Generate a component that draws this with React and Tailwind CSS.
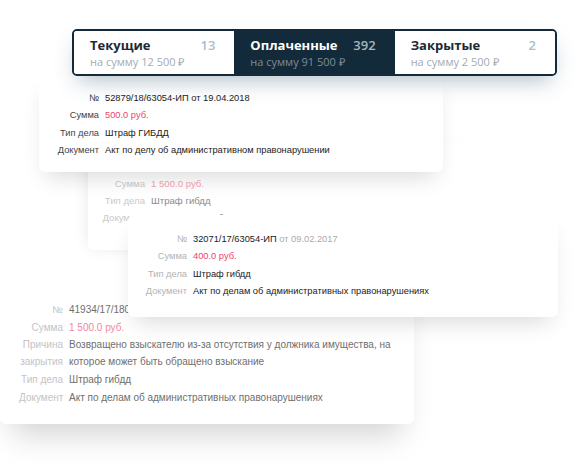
import React from 'react';

const tabs = [
  { title: 'Текущие', count: '13', sum: 'на сумму 12 500 ₽' },
  { title: 'Оплаченные', count: '392', sum: 'на сумму 91 500 ₽', active: true },
  { title: 'Закрытые', count: '2', sum: 'на сумму 2 500 ₽' },
];

const Tabs = () => (
  <div className="absolute left-[72px] top-[29px] z-40 grid h-[47px] w-[485px] grid-cols-3 overflow-hidden rounded-[5px] border-2 border-[#14293a] bg-white shadow-[0_10px_22px_-6px_rgba(30,70,100,0.35)]" style={{ fontFamily: '"Open Sans", sans-serif' }}>
    {tabs.map((t) => (
      <div
        key={t.title}
        className={`flex flex-col justify-center pl-[16px] pr-[19px] ${t.active ? 'bg-[#132a3b]' : 'bg-white'}`}
      >
        <div className="flex items-center justify-between leading-[18px]">
          <span className={`text-[13px] font-bold ${t.active ? 'text-white' : 'text-[#1d2a34]'}`}>{t.title}</span>
          <span className={`text-[13px] font-semibold ${t.active ? 'text-[#a9b4bd]' : 'text-[#a5bfd2]'}`}>{t.count}</span>
        </div>
        <div className={`text-[11px] leading-[16px] ${t.active ? 'text-[#7d8c98]' : 'text-[#a3abb1]'}`}>{t.sum}</div>
      </div>
    ))}
  </div>
);

const Row = ({ label, children, labelClass, valueClass, rowClass }) => (
  <div className={`grid gap-x-[6px] ${rowClass}`}>
    <div className={`text-right ${labelClass}`}>{label}</div>
    <div className={valueClass}>{children}</div>
  </div>
);

const Card = ({ className, children }) => (
  <div
    className={`absolute rounded-[6px] bg-white ${className}`}
    style={{ fontFamily: '"Liberation Sans", Arial, sans-serif' }}
  >
    {children}
  </div>
);

const App = () => {
  const small = 'grid-cols-[42px_1fr] leading-[17.3px]';
  const mid = 'grid-cols-[43px_1fr] leading-[17px]';
  const big = 'grid-cols-[44px_1fr] leading-[17.6px]';

  return (
    <div className="relative h-[468px] w-[578px] overflow-hidden bg-white">
      {/* faded card behind */}
      <Card className="left-[88px] top-[140px] z-10 h-[110px] w-[472px] pl-[14px] pt-[18px] text-[9.6px] shadow-[-6px_4px_16px_-8px_rgba(0,0,0,0.12)]">
        <Row rowClass={mid} label="№" labelClass="text-[#c9c9c9]" valueClass="text-[#8a8a8a]">41115/17/63054-ИП от 12.03.2017</Row>
        <Row rowClass={mid} label="Сумма" labelClass="text-[#c9c9c9]" valueClass="text-[#f5a2b3]">1 500.0 руб.</Row>
        <Row rowClass={mid} label="Тип дела" labelClass="text-[#c9c9c9]" valueClass="text-[#8a8a8a]">Штраф гибдд</Row>
        <Row rowClass={mid} label="Документ" labelClass="text-[#c9c9c9]" valueClass="text-[#8a8a8a]">Акт по делам об административных правонарушениях</Row>
      </Card>

      {/* bottom closed card */}
      <Card className="left-0 top-[284px] z-20 w-[414px] pb-[18px] pl-[19px] pt-[17px] text-[10px] shadow-[0_22px_30px_-12px_rgba(0,0,0,0.18)]">
        <Row rowClass={big} label="№" labelClass="text-[#c4c4c4]" valueClass="text-[#6f6f6f]">41934/17/18042-ИП от 22.05.2017</Row>
        <Row rowClass={big} label="Сумма" labelClass="text-[#c4c4c4]" valueClass="text-[#f4869e]">1 500.0 руб.</Row>
        <div className="grid grid-cols-[44px_1fr] gap-x-[6px] py-[1px] leading-[16.5px]">
          <div className="text-right text-[#c4c4c4]">Причина<br />закрытия</div>
          <div className="text-[#6f6f6f]">Возвращено взыскателю из-за отсутствия у должника имущества, на<br />которое может быть обращено взыскание</div>
        </div>
        <Row rowClass={big} label="Тип дела" labelClass="text-[#c4c4c4]" valueClass="text-[#6f6f6f]">Штраф гибдд</Row>
        <Row rowClass={big} label="Документ" labelClass="text-[#c4c4c4]" valueClass="text-[#6f6f6f]">Акт по делам об административных правонарушениях</Row>
      </Card>

      {/* top card */}
      <Card className="left-[39px] top-[75px] z-30 h-[97px] w-[404px] pl-[18px] pt-[15px] text-[9.3px] shadow-[0_12px_22px_-8px_rgba(0,0,0,0.16)]">
        <Row rowClass={small} label="№" labelClass="text-[#444]" valueClass="text-[#222]">52879/18/63054-ИП от 19.04.2018</Row>
        <Row rowClass={small} label="Сумма" labelClass="text-[#444]" valueClass="text-[#f2436b]">500.0 руб.</Row>
        <Row rowClass={small} label="Тип дела" labelClass="text-[#444]" valueClass="text-[#222]">Штраф ГИБДД</Row>
        <Row rowClass={small} label="Документ" labelClass="text-[#444]" valueClass="text-[#222]">Акт по делу об административном правонарушении</Row>
      </Card>

      {/* middle card */}
      <Card className="left-[128px] top-[215px] z-30 h-[102px] w-[430px] pl-[17px] pt-[16px] text-[9.3px] shadow-[0_12px_22px_-8px_rgba(0,0,0,0.16)]">
        <Row rowClass={small} label="№" labelClass="text-[#b3b3b3]" valueClass="text-[#222]">
          32071/17/63054-ИП <span className="text-[#aaa]">от 09.02.2017</span>
        </Row>
        <Row rowClass={small} label="Сумма" labelClass="text-[#b3b3b3]" valueClass="text-[#f2436b]">400.0 руб.</Row>
        <Row rowClass={small} label="Тип дела" labelClass="text-[#b3b3b3]" valueClass="text-[#222]">Штраф гибдд</Row>
        <Row rowClass={small} label="Документ" labelClass="text-[#b3b3b3]" valueClass="text-[#222]">Акт по делам об административных правонарушениях</Row>
      </Card>

      <Tabs />
    </div>
  );
};

export default App;
